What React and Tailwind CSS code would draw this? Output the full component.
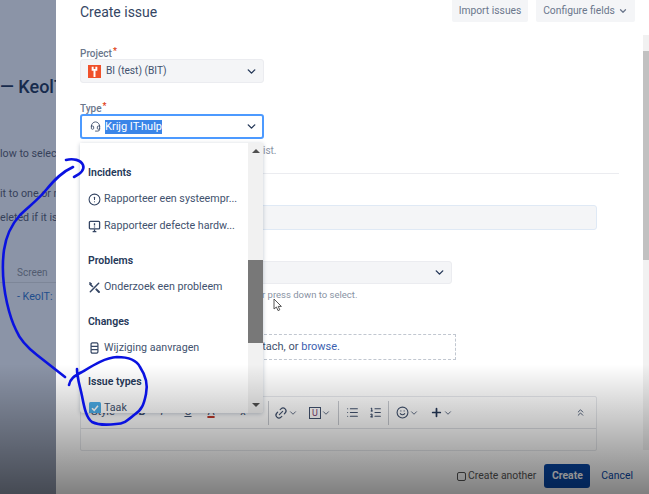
import React from "react";
import { ChevronDown, ChevronsUp, CircleAlert, Headset, Link2, List, ListOrdered, Plus, Smile } from "lucide-react";

// blue pen marks drawn over the screenshot
const Ink = () => (
  <svg className="absolute inset-0" width="649" height="494" fill="none" stroke="#0a12e0" strokeWidth="2.6" strokeLinecap="round" strokeLinejoin="round">
    <path d="M74 177 C80 174 85 170 83 165 C81 160 73 158 66 160" />
    <path d="M73 167 C62 172 55 179 46 190 C38 200 28 207 20 215 C12 224 6 236 4 250 C2 265 3 285 7 303 C10 316 12 322 16 330 C20 340 28 348 37 355 C46 362 56 370 65 377" />
    <path d="M69 385 C70 379 74 376 82 372 C92 366 104 358 117 357 C128 357 136 359 140 367 C146 376 148 385 146 394 C144 404 142 410 134 415 C128 420 124 424 116 424 C108 425 98 425 92 422 C86 418 84 406 82 396 C80 386 77 378 77 369" />
  </svg>
);

const Select = ({ className, children }) => (
  <div className={"flex items-center rounded-[3px] bg-[#f4f5f7] border border-[#ebecf0] " + className}>
    {children}
    <ChevronDown size={13} strokeWidth={2.6} className="ml-auto mr-[5px] text-[#253858]" />
  </div>
);

const Label = ({ className, children }) => (
  <div className={"h-[14px] text-[10px] leading-[18px] font-medium text-[#6b778c] " + className}>
    {children}
    <span className="align-top text-[#de350b] ml-[1px] text-[9px] leading-[12px]">*</span>
  </div>
);

const MenuHeading = ({ className, children }) => (
  <div className={"text-[10.5px] leading-[16px] font-semibold text-[#253858] " + className}>{children}</div>
);

const MenuItem = ({ icon, className, children }) => (
  <div className={"flex items-center h-[16px] text-[10.7px] text-[#42526e] whitespace-nowrap " + className}>
    <span className="w-[13px] mr-[3px] shrink-0 flex justify-center text-[#344563]">{icon}</span>
    {children}
  </div>
);

const MonitorAlert = () => (
  <svg width="13" height="13" viewBox="0 0 14 14" fill="none" stroke="currentColor" strokeWidth="1.4">
    <rect x="1.5" y="1.5" width="11" height="8" rx="1" />
    <path d="M7 3.4v2.6M7 7v1M5 12.5h4M7 10v2" />
  </svg>
);

const Tools = () => (
  <svg width="13" height="13" viewBox="0 0 14 14" fill="none" stroke="currentColor" strokeWidth="1.6" strokeLinecap="round">
    <path d="M11.5 2.5 2.5 11.5" />
    <path d="M2 3.5 5 6M2 2l1.5 1" />
    <path d="M9 9l2.8 2.8" strokeWidth="2.2" />
  </svg>
);

const Database = () => (
  <svg width="9" height="12" viewBox="0 0 10 14" fill="none" stroke="currentColor" strokeWidth="1.4">
    <rect x="1" y="1" width="8" height="12" rx="1.5" />
    <path d="M1 5h8M1 9h8" />
  </svg>
);

const TaskIcon = () => (
  <svg width="12" height="12" viewBox="0 0 12 12">
    <rect width="12" height="12" rx="1.5" fill="#4bade8" />
    <path d="M3 6.2 5.2 8.4 9 3.8" fill="none" stroke="#fff" strokeWidth="1.6" />
  </svg>
);

const ProjectIcon = () => (
  <svg width="13" height="13" viewBox="0 0 12 12" className="shrink-0">
    <rect width="12" height="12" fill="#f0512b" />
    <path d="M4.3 1.5v3h3.4v-3M6 4.5V11" stroke="#fff" strokeWidth="1.8" fill="none" />
  </svg>
);

const Cursor = () => (
  <svg className="absolute left-[273px] top-[298px]" width="10" height="14" viewBox="0 0 10 14" fill="#fff" stroke="#555" strokeWidth="1">
    <path d="M1 1v10l2.4-2 1.6 3.6 1.8-.8L5.2 8.4H8.4Z" />
  </svg>
);

const Sep = ({ className }) => <span className={"h-[24px] border-l border-[#c7cad0] " + className} />;

export default function App() {
  return (
    <div className="relative w-[649px] h-[494px] overflow-hidden flex bg-white font-['Roboto',sans-serif]">
      {/* page behind the modal, only its right edge shows */}
      <div className="w-[56px] shrink-0 bg-[#8b94a7] overflow-hidden text-[#36415a] whitespace-nowrap">
        <div className="mt-[73px] text-[18px] leading-[28px] font-medium text-[#172b4d]">— KeolT</div>
        <div className="mt-[45px] text-[10.7px] leading-[16px]">low to select</div>
        <div className="mt-[24px] text-[10.7px] leading-[16px]">it to one or more</div>
        <div className="mt-[8px] text-[10.7px] leading-[16px]">eleted if it is</div>
        <div className="mt-[40px] ml-[17px] text-[10px] leading-[14px] text-[#525c70]">Screen</div>
        <div className="mt-[2px] border-t border-[#7d8698] pt-[6px] pl-[17px] text-[10.7px] leading-[16px] text-[#1f4e8c]">- KeolT:</div>
      </div>

      <div className="relative flex-1 min-w-0 pl-[24px]">
        <div className="flex items-start">
          <div className="text-[14px] leading-[24px] text-[#344563]">Create issue</div>
          <div className="ml-auto mr-[14px] flex gap-[8px] text-[10.3px] text-[#6b778c] whitespace-nowrap">
            <div className="h-[22px] w-[76px] flex items-center justify-center rounded-b-[2px] bg-[#f4f5f7]">Import issues</div>
            <div className="h-[22px] w-[99px] flex items-center justify-center gap-[3px] rounded-b-[2px] bg-[#f4f5f7]">
              Configure fields
              <ChevronDown size={10} strokeWidth={3} />
            </div>
          </div>
        </div>

        <Label className="mt-[21px]">Project</Label>
        <Select className="w-[184px] h-[24px] pl-[7px]">
          <ProjectIcon />
          <span className="ml-[5px] text-[10.2px] text-[#42526e]">BI (test) (BIT)</span>
        </Select>

        <Label className="mt-[17px]">Type</Label>
        <div className="w-[184px] h-[25px] flex items-center rounded-[3px] bg-white border-2 border-[#4c9aff] pl-[8px]">
          <Headset size={11} className="text-[#42526e] shrink-0" />
          <span className="ml-[4px] text-[11px] leading-[14px] bg-[#3a85e8] text-white">Krijg IT-hulp</span>
          <ChevronDown size={13} strokeWidth={2.6} className="ml-auto mr-[4px] text-[#253858]" />
        </div>

        <div className="h-[35px] w-[539px] border-b border-[#ebecf0] pl-[183px] pt-[5px] text-[10px] leading-[14px] text-[#8993a4]">ist.</div>

        <div className="mt-[31px] w-[517px] h-[25px] rounded-[3px] bg-[#f4f5f7] border border-[#dfe9f5]" />

        <Select className="mt-[31px] w-[372px] h-[23px]"> </Select>
        <div className="mt-[4px] ml-[182px] text-[9.5px] leading-[14px] text-[#8993a4]">r press down to select.</div>

        <div className="mt-[32px] w-[376px] h-[26px] border border-dashed border-[#c1c7d0] flex items-center justify-end pr-[115px] text-[11px] text-[#42526e]">
          <span>attach, or <span className="text-[#3b5fb0]">browse.</span></span>
        </div>

        <div className="mt-[36px] w-[517px] h-[55px] border border-[#e6e8ec] rounded-[2px]">
          <div className="h-[32px] border-b border-[#dfe1e6] flex items-center text-[#42526e]">
            <span className="w-[51px] pl-[10px] text-[11px]">Style</span>
            <span className="w-[20px] text-center text-[11px] font-bold">B</span>
            <span className="w-[20px] text-center text-[11px] italic">I</span>
            <span className="w-[32px] text-center text-[11px] underline">U</span>
            <span className="w-[14px] text-center text-[11px] underline decoration-[#c0392b] decoration-2">A</span>
            <span className="w-[50px] text-center text-[11px]">x</span>
            <Sep />
            <Link2 size={14} className="ml-[5px] -rotate-45" />
            <ChevronDown size={10} />
            <span className="ml-[11px] w-[12px] h-[12px] border border-[#42526e] flex justify-center text-[9px] leading-[10px] text-[#7a3b6e]">U</span>
            <ChevronDown size={10} />
            <Sep className="ml-[7px]" />
            <List size={13} className="ml-[7px]" />
            <ListOrdered size={13} className="ml-[10px]" />
            <Sep className="ml-[6px]" />
            <Smile size={13} className="ml-[7px]" />
            <ChevronDown size={10} />
            <Plus size={13} strokeWidth={3.2} className="ml-[11px] text-[#253858]" />
            <ChevronDown size={10} />
            <ChevronsUp size={11} className="ml-auto mr-[10px]" />
          </div>
        </div>

        <div className="mt-[13px] mr-[16px] flex items-center justify-end text-[10.4px]">
          <span className="w-[9px] h-[9px] border border-[#555] rounded-[2px] mr-[2px]" />
          <span className="text-[#555]">Create another</span>
          <span className="ml-[8px] w-[46px] h-[24px] flex items-center justify-center rounded-[3px] bg-[#0747a6] text-white font-bold">Create</span>
          <span className="ml-[11px] text-[#0747a6]">Cancel</span>
        </div>

        {/* modal scrollbar */}
        <div className="absolute top-[35px] right-0 bottom-[44px] w-[6px] bg-[#f1f1f1]">
          <div className="mt-[16px] h-[209px] bg-[#c1c1c1]" />
        </div>

        {/* open type dropdown */}
        <div className="absolute top-[143px] left-[24px] w-[183px] h-[270px] flex bg-white shadow-[0_1px_4px_rgba(9,30,66,0.25)] rounded-b-[3px] overflow-hidden">
          <div className="flex-1 min-w-0 pl-[8px] pt-[22px]">
            <MenuHeading>Incidents</MenuHeading>
            <MenuItem icon={<CircleAlert size={13} />} className="mt-[10px]">Rapporteer een systeempr...</MenuItem>
            <MenuItem icon={<MonitorAlert />} className="mt-[11px]">Rapporteer defecte hardw...</MenuItem>
            <MenuHeading className="mt-[19px]">Problems</MenuHeading>
            <MenuItem icon={<Tools />} className="mt-[10px]">Onderzoek een probleem</MenuItem>
            <MenuHeading className="mt-[19px]">Changes</MenuHeading>
            <MenuItem icon={<Database />} className="mt-[10px]">Wijziging aanvragen</MenuItem>
            <MenuHeading className="mt-[18px]">Issue types</MenuHeading>
            <MenuItem icon={<TaskIcon />} className="mt-[10px]">Taak</MenuItem>
          </div>
          <div className="w-[15px] shrink-0 flex flex-col bg-[#f1f1f1]">
            <div className="h-[117px] flex justify-center pt-[6px]">
              <span className="w-0 h-0 border-x-[4px] border-x-transparent border-b-[4px] border-b-[#505050]" />
            </div>
            <div className="h-[83px] bg-[#787878]" />
            <div className="flex-1 flex justify-center items-end pb-[6px]">
              <span className="w-0 h-0 border-x-[4px] border-x-transparent border-t-[4px] border-t-[#505050]" />
            </div>
          </div>
        </div>
      </div>

      <Cursor />
      {/* dark fade along the bottom of the capture */}
      <div className="absolute inset-x-0 bottom-0 h-[130px] bg-gradient-to-b from-transparent to-[#000000]/50" />
      <Ink />
    </div>
  );
}
